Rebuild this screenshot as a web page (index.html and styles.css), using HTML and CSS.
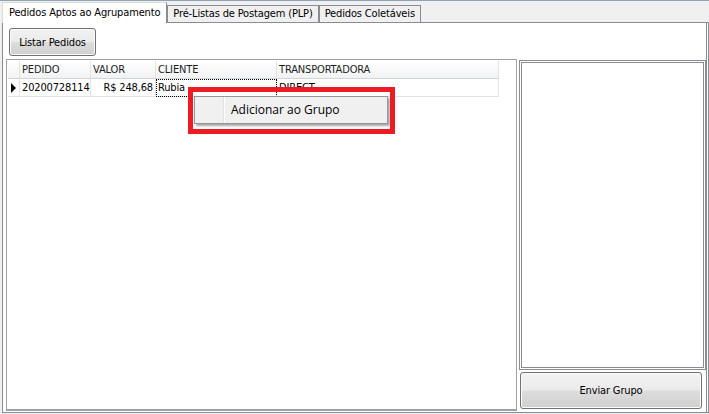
FILE: index.html
```html
<!DOCTYPE html>
<html>
<head>
<meta charset="utf-8">
<link rel="stylesheet" href="styles.css">
</head>
<body>
<div class="window">
  <div class="tabs">
    <div class="tab active">Pedidos Aptos ao Agrupamento</div>
    <div class="tab">Pré-Listas de Postagem (PLP)</div>
    <div class="tab">Pedidos Coletáveis</div>
  </div>
  <div class="page">
    <div class="toolbar">
      <button class="btn btn-listar">Listar Pedidos</button>
    </div>
    <div class="content">
      <div class="grid">
        <div class="grid-inner">
          <div class="row header">
            <div class="cell ind"></div>
            <div class="cell c1">PEDIDO</div>
            <div class="cell c2">VALOR</div>
            <div class="cell c3">CLIENTE</div>
            <div class="cell c4">TRANSPORTADORA</div>
          </div>
          <div class="row data">
            <div class="cell ind"><span class="tri"></span></div>
            <div class="cell c1 clip">2020072811460</div>
            <div class="cell c2 num">R$ 248,68</div>
            <div class="cell c3 focus">Rubia</div>
            <div class="cell c4">DIRECT</div>
          </div>
        </div>
      </div>
      <div class="side">
        <div class="side-list"></div>
        <button class="btn btn-enviar">Enviar Grupo</button>
      </div>
    </div>
  </div>
</div>
<div class="menu">
  <div class="menu-gutter"></div>
  <div class="menu-item">Adicionar ao Grupo</div>
</div>
<div class="highlight"></div>
</body>
</html>
```

FILE: styles.css
```css
html, body {
  margin: 0;
  padding: 0;
}
body {
  width: 709px;
  height: 414px;
  overflow: hidden;
  background: #f0f0f0;
  font-family: "DejaVu Sans Condensed", "DejaVu Sans", sans-serif;
  font-size: 11px;
  letter-spacing: -0.15px;
  color: #000;
  position: relative;
}
.window {
  height: 413px;
  border-top: 1px solid #8fa2b9;
  display: flex;
  flex-direction: column;
}
.tabs {
  display: flex;
  align-items: flex-end;
  height: 21px;
  padding-left: 2px;
  box-sizing: border-box;
}
.tab {
  height: 17px;
  line-height: 16px;
  padding: 0 5px 0 5px;
  border: 1px solid #898c95;
  border-bottom: none;
  background: #f0f0f0;
  box-sizing: border-box;
  white-space: nowrap;
}
.tab.active {
  height: 21px;
  line-height: 20px;
  background: #fff;
  padding: 0 6px 0 6px;
  position: relative;
  z-index: 1;
  margin-bottom: -1px;
  border-color: #d9d9d9;
  border-right-color: #898c95;
}
.page {
  flex: 1;
  margin: 0 0 1px 2px;
  background: #fff;
  border: 1px solid #898c95;
  border-right: 3px double #898c95;
  display: flex;
  flex-direction: column;
  padding: 5px 0 1px 3px;
}
.toolbar {
  height: 31px;
  padding-left: 3px;
  display: flex;
  align-items: flex-start;
}
.btn {
  font-family: inherit;
  font-size: 11px;
  letter-spacing: inherit;
  color: #000;
  border: 1px solid #707070;
  border-radius: 3px;
  background: linear-gradient(#f2f2f2 0%, #ebebeb 48%, #dddddd 52%, #cfcfcf 100%);
  box-shadow: inset 0 0 0 1px #fcfcfc;
  padding: 0;
  margin: 0;
}
.btn-listar {
  width: 87px;
  height: 28px;
}
.content {
  flex: 1;
  display: flex;
  gap: 2px;
}
.grid {
  width: 511px;
  border: 1px solid #a0a0a0;
  border-bottom-width: 2px;
  padding: 1px;
  box-sizing: border-box;
  background: #fff;
}
.grid-inner {
  width: 491px;
}
.row {
  display: flex;
  height: 18px;
}
.row.header {
  height: 17px;
  background: linear-gradient(#ffffff, #f1f2f4);
  border-bottom: 1px solid #d5d5d5;
}
.cell {
  box-sizing: border-box;
  padding: 0 2px;
  line-height: 17px;
  white-space: nowrap;
  overflow: hidden;
  border-right: 1px solid #e3e3e3;
}
.clip {
  padding-right: 0;
  text-overflow: clip;
}
.row.header .cell {
  line-height: 17px;
  color: #1e1e1e;
}
.row.data .cell {
  border-bottom: 1px solid #e3e3e3;
  color: #000;
}
.ind { width: 12px; padding: 0; }
.c1 { width: 71px; }
.c2 { width: 65px; }
.c3 { width: 121px; }
.c4 { width: 222px; }
.num { text-align: right; }
.focus {
  outline: 1px dotted #000;
  outline-offset: -1px;
}
.tri {
  display: block;
  margin: 4px 0 0 3px;
  width: 0;
  height: 0;
  border-top: 5px solid transparent;
  border-bottom: 5px solid transparent;
  border-left: 5px solid #000;
}
.side {
  flex: 1;
  display: flex;
  flex-direction: column;
  gap: 2px;
  padding-top: 1px;
  padding-bottom: 2px;
}
.side-list {
  flex: 1;
  border: 3px double #898c95;
  background: #fff;
}
.btn-enviar {
  height: 37px;
  width: 182px;
  margin-left: 1px;
}
.menu {
  position: absolute;
  left: 194px;
  top: 96px;
  width: 194px;
  height: 28px;
  box-sizing: border-box;
  background: #f0f0f0;
  border: 1px solid #979797;
  box-shadow: 2px 2px 2px rgba(0,0,0,0.35);
  display: flex;
  font-family: "Open Sans", "DejaVu Sans", sans-serif;
  font-size: 12px;
  letter-spacing: 0;
}
.menu-gutter {
  width: 28px;
  border-right: 1px solid #e2e3e3;
  box-shadow: 1px 0 0 #fff;
}
.menu-item {
  padding-left: 7px;
  line-height: 26px;
  color: #000;
}
.highlight {
  position: absolute;
  left: 188px;
  top: 87px;
  width: 207px;
  height: 47px;
  box-sizing: border-box;
  border: 5px solid #ed1c24;
}
```
